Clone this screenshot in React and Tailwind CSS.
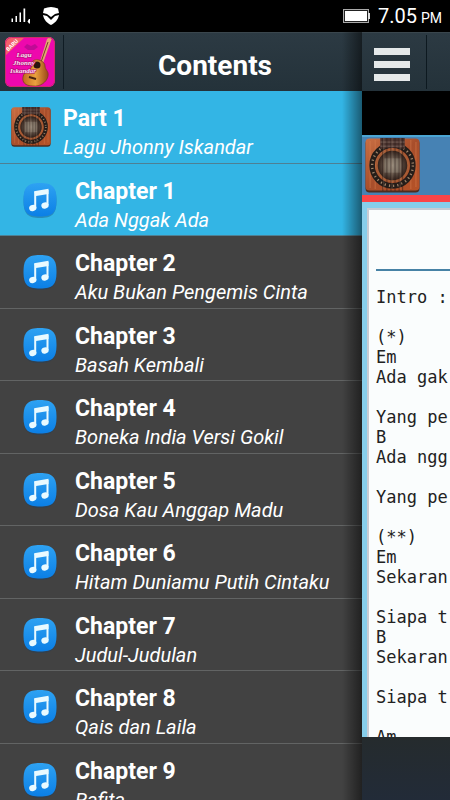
import clsx from 'clsx';

const chapters = [
  'Ada Nggak Ada',
  'Aku Bukan Pengemis Cinta',
  'Basah Kembali',
  'Boneka India Versi Gokil',
  'Dosa Kau Anggap Madu',
  'Hitam Duniamu Putih Cintaku',
  'Judul-Judulan',
  'Qais dan Laila',
  'Rafita',
];

const lyrics = `Intro :

(*)
Em
Ada gak

Yang pe
B
Ada ngg

Yang pe

(**)
Em
Sekaran

Siapa t
B
Sekaran

Siapa t

Am`;

const SoundHole = ({ className }) => (
  <svg viewBox="0 0 54 54" className={className} aria-hidden="true">
    <defs>
      <linearGradient id="wood" x1="0" x2="1" y1="0" y2="1">
        <stop offset="0" stopColor="#c96f43" />
        <stop offset="0.5" stopColor="#a84e2b" />
        <stop offset="1" stopColor="#b65227" />
      </linearGradient>
      <radialGradient id="hole">
        <stop offset="0" stopColor="#8c7e70" />
        <stop offset="0.45" stopColor="#695a4e" />
        <stop offset="1" stopColor="#2c1b15" />
      </radialGradient>
    </defs>
    <rect x="0.5" y="1.5" width="53" height="52" rx="4" fill="#4e2c20" />
    <rect x="0.5" y="0.5" width="53" height="51" rx="4" fill="url(#wood)" />
    <path d="M5 3v46M10 2v48M45 2v48M50 4v44" stroke="#da8050" strokeWidth="1" opacity="0.5" />
    <circle cx="27" cy="27" r="20" fill="none" stroke="#251d19" strokeWidth="5.5" />
    <circle cx="27" cy="27" r="20" fill="none" stroke="#a0846a" strokeWidth="2.4" strokeDasharray="1.2 3" />
    <circle cx="27" cy="27" r="15.5" fill="url(#hole)" stroke="#a65c35" strokeWidth="2" />
    <path d="M19 20h16v14H19z" fill="#aaa08f" opacity="0.35" />
    <path d="M15 0h24v11c-7-2-17-2-24 0z" fill="#49322e" />
    <path d="M15 4h24M15 8h24" stroke="#826d64" strokeWidth="0.8" />
    <path d="M17.5 0v52M21.5 0v52M25.5 0v52M29.5 0v52M33.5 0v52M37 0v52" stroke="#271a17" strokeWidth="0.9" opacity="0.6" />
    <path d="M18.5 0v50M26.5 0v50M34.5 0v50" stroke="#b59c88" strokeWidth="0.5" opacity="0.6" />
  </svg>
);

const MusicIcon = () => (
  <svg viewBox="0 0 36 36" className="w-9 h-9 shrink-0" aria-hidden="true">
    <defs>
      <linearGradient id="tile" x1="0" x2="0" y1="0" y2="1">
        <stop offset="0" stopColor="#2ea2f2" />
        <stop offset="1" stopColor="#0b7fe6" />
      </linearGradient>
    </defs>
    <path
      d="M18 2C30 2 34.5 6 34.5 19S30 36 18 36 1.5 32 1.5 19 6 2 18 2Z"
      fill="#173f68"
      opacity="0.35"
    />
    <path
      d="M18 1C30.5 1 34.5 5 34.5 18S30.5 34.5 18 34.5 1.5 31 1.500 18 5.5 1 18 1Z"
      fill="url(#tile)"
    />
    <path d="M12 9.200 26.500 6.800V12L14 14Z" fill="#e9faff" />
    <path d="M13.200 10v16M25.500 8v15" stroke="#e9faff" strokeWidth="2" />
    <ellipse cx="10.800" cy="26" rx="3.700" ry="3" transform="rotate(-15 10.8 26)" fill="#e9faff" />
    <ellipse cx="23" cy="23.500" rx="3.700" ry="3" transform="rotate(-15 23 23.5)" fill="#e9faff" />
  </svg>
);

const AppLogo = () => (
  <svg viewBox="0 0 52 52" className="w-[52px] h-[52px]" role="img" aria-label="Lagu Jhonny Iskandar">
    <defs>
      <clipPath id="logo-clip">
        <rect x="1" y="1" width="50" height="50" rx="6" />
      </clipPath>
      <linearGradient id="guitar" x1="0" x2="1">
        <stop offset="0" stopColor="#c46b1f" />
        <stop offset="0.5" stopColor="#eaa13f" />
        <stop offset="1" stopColor="#9a4818" />
      </linearGradient>
    </defs>
    <g clipPath="url(#logo-clip)">
      <rect width="52" height="52" fill="#ee08ad" />
      <path d="M20 11l3-3 4 2 4-2 3 3-4 3h-6z" fill="#c00a96" />
      <path d="M0 0H22L0 21Z" fill="#f4606c" />
      <path d="M43 3l3-2 2 1-10 28-3-1z" fill="#e2a774" />
      <path d="M44 6 36 29" stroke="#764225" strokeWidth="1" />
      <path
        d="M29 25c4-3 12 0 12 5 0 4 4 5 3 10-1 6-8 11-15 10-8 0-11-4-10-9 1-6 7-6 8-9 1-3 0-5 2-7Z"
        fill="url(#guitar)"
        stroke="#81401e"
        strokeWidth="0.8"
      />
      <circle cx="33" cy="29" r="3.5" fill="#28140f" />
      <path d="M25 41l7 2" stroke="#49230f" strokeWidth="2" />
      <text x="8" y="11" transform="rotate(-45 8 9)" fontFamily="Roboto, sans-serif" fontWeight="700" fontSize="5.5" fill="#fff" textAnchor="middle">
        BARU
      </text>
      <g
        fontFamily="'Liberation Serif', serif"
        fontStyle="italic"
        fontWeight="700"
        fontSize="7"
        fill="#ffe4f6"
        stroke="#b00a76"
        strokeWidth="1"
        paintOrder="stroke"
        textAnchor="middle"
      >
        <text x="20" y="21">Lagu</text>
        <text x="20" y="29">Jhonny</text>
        <text x="19" y="37">Iskandar</text>
      </g>
    </g>
    <rect x="1.5" y="1.5" width="49" height="49" rx="6" fill="none" stroke="#d12a6c" />
  </svg>
);

const StatusBar = () => (
  <div className="h-8 shrink-0 bg-black text-white flex items-center justify-between pl-[11px] pr-2">
    <div className="flex items-center gap-3">
      <svg viewBox="0 0 20 18" className="w-5 h-[18px]" fill="#fff" aria-hidden="true">
        <path d="M0.500 11.500H2V15H0.500zM4.500 9H6v6H4.500zM8.500 5.500H10V15H8.500zM12.500 1.500h1.700V15h-1.700zM18 12h1v4.500h-1l-1.500-2z" />
      </svg>
      <svg viewBox="0 0 16 18" className="w-4 h-[18px]" fill="#fff" aria-hidden="true">
        <path d="M1 1.500Q8-1.500 15 1.500L16 6 12 7 8 10 4 7 0 6Z" />
        <path d="M0 8l4 1 4 4 4-4 4-1c-1 5-4 8-8 10C4 16 1 13 0 8Z" />
      </svg>
    </div>
    <div className="flex items-center gap-2">
      <svg viewBox="0 0 27 16" className="w-[27px] h-4" aria-hidden="true">
        <rect x="0.5" y="1.5" width="25" height="13" fill="#222" stroke="#aaa" />
        <rect x="2" y="3" width="22" height="10" fill="#fff" />
        <path d="M25 5h2v6h-2z" fill="#ddd" />
      </svg>
      <div className="flex items-baseline gap-1">
        <span className="text-xl leading-8">7.05</span>
        <span className="text-sm">PM</span>
      </div>
    </div>
  </div>
);

const Entry = ({ icon, title, subtitle, active, className }) => (
  <li className={clsx('border-b', active ? 'bg-[#33b5e5] border-[#4e8094]' : 'bg-[#424242] border-[#626464]', className)}>
    <a href="#song" className="flex h-full items-center">
      {icon}
      <div className="whitespace-nowrap pt-3">
        <div className="text-[23px] leading-7 font-bold">{title}</div>
        <div className="text-xl leading-7 italic">{subtitle}</div>
      </div>
    </a>
  </li>
);

const Drawer = () => (
  <nav className="relative flex-1 min-w-0 bg-[#424242] text-white">
    <header className="h-[59px] flex items-center bg-linear-to-b from-[#2c3a43] to-[#24323a] border-t border-[#3a464d]">
      <div className="w-16 h-[54px] pl-1 flex items-center border-r border-[#101c24]">
        <AppLogo />
      </div>
      <h1 className="flex-1 text-center text-[28px] font-bold pt-2 pl-1">Contents</h1>
    </header>
    <ul>
      <Entry
        active
        className="h-[73px]"
        title="Part 1"
        subtitle="Lagu Jhonny Iskandar"
        icon={<SoundHole className="w-10 h-10 ml-[11px] mr-3 shrink-0" />}
      />
      {chapters.map((name, i) => (
        <Entry
          key={name}
          active={i === 0}
          className="odd:h-[73px] even:h-[72px]"
          title={`Chapter ${i + 1}`}
          subtitle={name}
          icon={<div className="pl-[22px] pr-[17px]"><MusicIcon /></div>}
        />
      ))}
    </ul>
    <div className="absolute inset-y-0 right-0 w-5 bg-linear-to-r from-transparent to-black/50 pointer-events-none" />
  </nav>
);

const SongPage = () => (
  <main className="w-[88px] shrink-0 overflow-hidden flex flex-col bg-black">
    <div className="h-[59px] shrink-0 flex items-center bg-linear-to-b from-[#2c3a43] to-[#24323a] border-t border-[#3a464d]">
      <button aria-label="Menu" className="w-[65px] h-[54px] shrink-0 pl-3 pt-1 flex flex-col justify-center gap-[6px] border-r border-[#0d1920]">
        <span className="w-9 h-[7px] bg-[#e5e9ea]" />
        <span className="w-9 h-[7px] bg-[#e5e9ea]" />
        <span className="w-9 h-[7px] bg-[#e5e9ea]" />
      </button>
    </div>
    <div className="mt-11 h-[60px] shrink-0 bg-[#4682b4] border-t-2 border-[#4ba5d3] pl-[3px] pt-px">
      <SoundHole className="w-[55px] h-[55px]" />
    </div>
    <div className="h-[7px] shrink-0 bg-[#fb4548]" />
    <article className="h-[535px] shrink-0 overflow-hidden bg-[#87ceeb] pl-[5px] pt-[6px]">
      <div className="h-full bg-[#fafdfd] border-l-2 border-t-2 border-[#c9cbd3] pl-[7px] text-[#222]">
        <div className="h-[61px] border-b-2 border-[#4682a5]" />
        <pre className="pt-4 font-['DejaVu_Sans_Mono',monospace] text-[17px] leading-5">{lyrics}</pre>
      </div>
    </article>
    <div className="flex-1 bg-linear-to-b from-[#252b2d] to-[#222b38]" />
  </main>
);

const App = () => (
  <div className="h-screen overflow-hidden flex flex-col bg-black font-['Roboto',sans-serif]">
    <StatusBar />
    <div className="flex flex-1 min-h-0 overflow-hidden">
      <Drawer />
      <SongPage />
    </div>
  </div>
);

export default App;
